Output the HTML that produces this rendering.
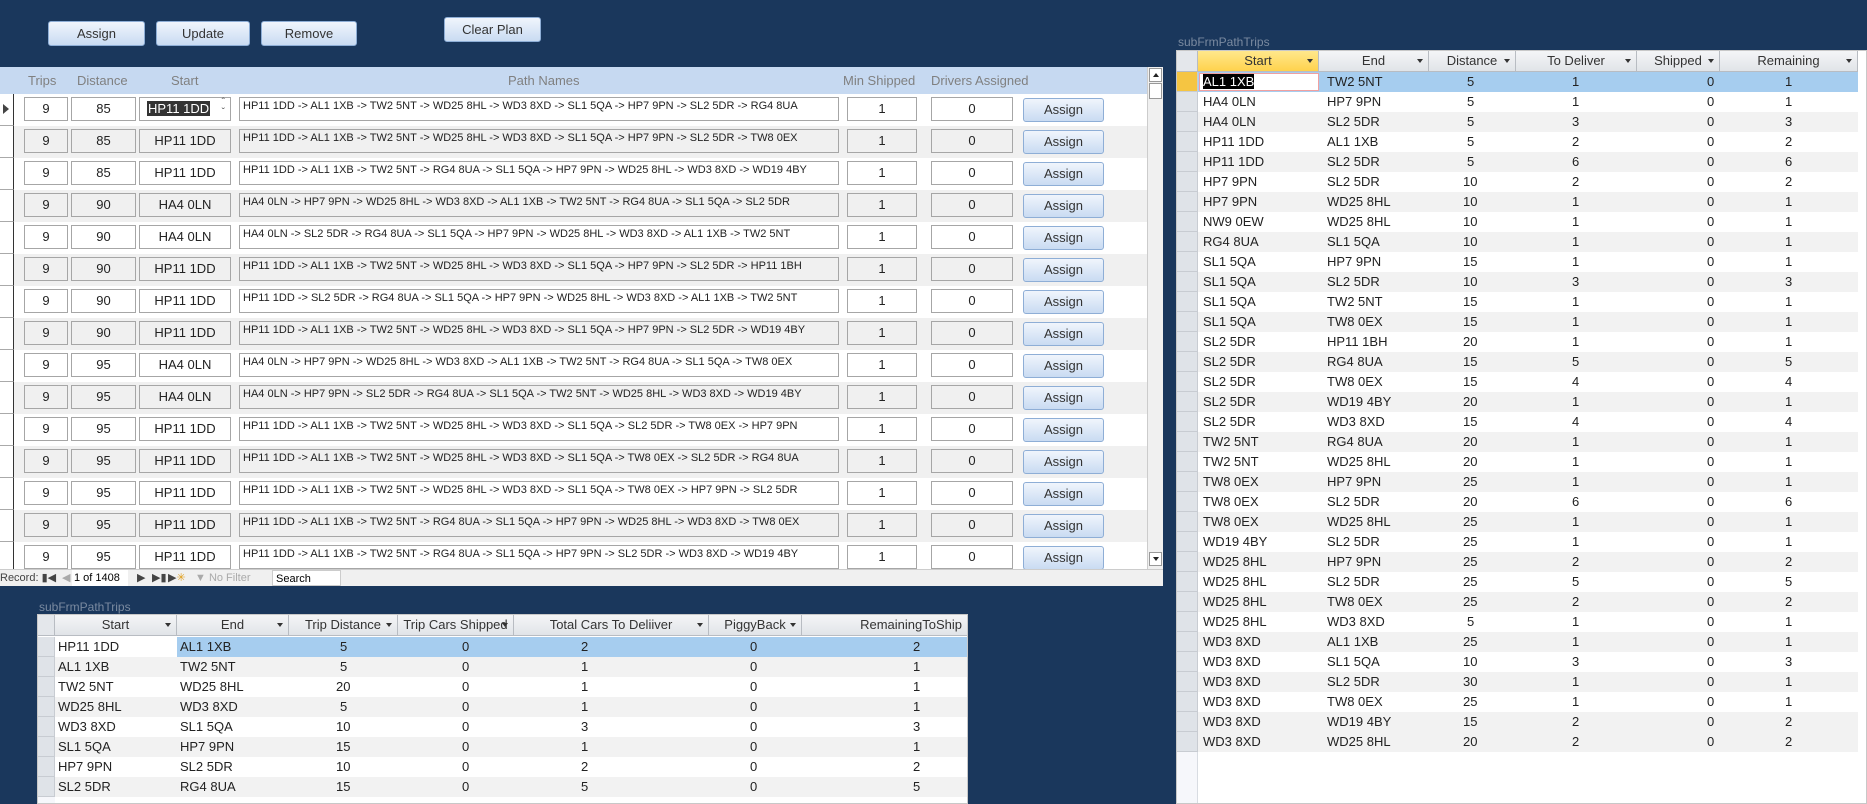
<!DOCTYPE html>
<html><head><meta charset="utf-8"><style>
*{box-sizing:border-box;margin:0;padding:0}
body{width:1867px;height:804px;background:#1a375c;position:relative;overflow:hidden;font-family:"Liberation Sans",sans-serif;color:#222}
.a{position:absolute}
.btn{position:absolute;border:1px solid #8eaed6;border-radius:3px;background:linear-gradient(#f0f5fc,#c9dbf2);font-size:13px;color:#333;text-align:center;line-height:23px}
#main{left:0;top:67px;width:1163px;height:519px;background:#fff;overflow:hidden}
.hdr{position:absolute;top:0;left:0;width:1147px;height:27px;background:#c6d9f1}
.hdr span{position:absolute;top:6px;font-size:13px;color:#808080}
.row{position:absolute;left:0;width:1147px;height:32px}
.row.g{background:#f0f0f0}
.sel{position:absolute;left:0;top:0;width:14px;height:32px;border-right:1px solid #333;border-bottom:1px solid #aaa;background:#fff}
.tb{position:absolute;top:3px;height:24px;border:1px solid #a6a6a6;background:#fff;font-size:13px;text-align:center;line-height:22px}
.g .tb{background:#f0f0f0}
.tb.p{text-align:left;font-size:11px;line-height:13px;padding:2px 3px;white-space:nowrap;overflow:hidden}
.row .btn{top:4px;left:1023px;width:81px;height:24px;line-height:22px}
.grid{position:absolute;background:#fff;border:1px solid #c8c8c8;overflow:hidden}
.gh{position:absolute;top:0;height:21px;background:linear-gradient(#f4f5f7,#e1e4e8);border-right:1px solid #b8bcc2;border-bottom:1px solid #b8bcc2;font-size:13px;color:#333;text-align:center;line-height:20px}
.gh i{position:absolute;right:5px;top:8px;width:0;height:0;border-left:3px solid transparent;border-right:3px solid transparent;border-top:4px solid #333}
.gr{position:absolute;left:0;height:20px;font-size:13px;line-height:20px;white-space:nowrap}
.gr.alt{background:#f2f2f2}
.gr span{position:absolute;top:0}
.gs{position:absolute;left:0;width:21px;height:20px;background:#dfe3e8;border-bottom:1px solid #c8ccd2;border-right:1px solid #c8ccd2}
.lbl{position:absolute;font-size:12px;color:#7a8aa0}
</style></head><body>

<div class="btn" style="left:48px;top:21px;width:97px;height:25px">Assign</div>
<div class="btn" style="left:156px;top:21px;width:94px;height:25px">Update</div>
<div class="btn" style="left:261px;top:21px;width:96px;height:25px">Remove</div>
<div class="btn" style="left:444px;top:17px;width:97px;height:25px">Clear Plan</div>

<div id="main" class="a">
<div class="hdr">
<span style="left:28px">Trips</span><span style="left:77px">Distance</span><span style="left:171px">Start</span><span style="left:508px">Path Names</span><span style="left:843px">Min Shipped</span><span style="left:931px">Drivers Assigned</span>
</div>
<div class="a" style="left:1147px;top:0;width:16px;height:505px;background:#f0f0f0;border-left:1px solid #ccc">
<div class="a" style="left:1px;top:1px;width:13px;height:14px;background:#fff;border:1px solid #999"><div class="a" style="left:3px;top:4px;border-left:3px solid transparent;border-right:3px solid transparent;border-bottom:4px solid #222"></div></div>
<div class="a" style="left:1px;top:16px;width:13px;height:16px;background:#fff;border:1px solid #999"></div>
<div class="a" style="left:1px;top:485px;width:13px;height:14px;background:#fff;border:1px solid #999"><div class="a" style="left:3px;top:4px;border-left:3px solid transparent;border-right:3px solid transparent;border-top:4px solid #222"></div></div>
</div>

<div class="row" style="top:27px"><div class="sel"><div class="a" style="left:3px;top:10px;border-top:5px solid transparent;border-bottom:5px solid transparent;border-left:6px solid #444"></div></div><div class="tb" style="left:24px;width:44px">9</div><div class="tb" style="left:71px;width:65px">85</div><div class="tb" style="left:139px;width:92px;text-align:left;padding-left:7px"><span style="background:#333;color:#fff;padding:0 1px">HP11 1DD</span><span class="a" style="right:5px;top:0;font-size:10px;line-height:10px;color:#555">&#710;<br>&#711;</span></div><div class="tb p" style="left:239px;width:600px">HP11 1DD -&gt; AL1 1XB -&gt; TW2 5NT -&gt; WD25 8HL -&gt; WD3 8XD -&gt; SL1 5QA -&gt; HP7 9PN -&gt; SL2 5DR -&gt; RG4 8UA</div><div class="tb" style="left:847px;width:70px">1</div><div class="tb" style="left:931px;width:82px">0</div><div class="btn">Assign</div></div>

<div class="row g" style="top:59px"><div class="sel"></div><div class="tb" style="left:24px;width:44px">9</div><div class="tb" style="left:71px;width:65px">85</div><div class="tb" style="left:139px;width:92px">HP11 1DD</div><div class="tb p" style="left:239px;width:600px">HP11 1DD -&gt; AL1 1XB -&gt; TW2 5NT -&gt; WD25 8HL -&gt; WD3 8XD -&gt; SL1 5QA -&gt; HP7 9PN -&gt; SL2 5DR -&gt; TW8 0EX</div><div class="tb" style="left:847px;width:70px">1</div><div class="tb" style="left:931px;width:82px">0</div><div class="btn">Assign</div></div>

<div class="row" style="top:91px"><div class="sel"></div><div class="tb" style="left:24px;width:44px">9</div><div class="tb" style="left:71px;width:65px">85</div><div class="tb" style="left:139px;width:92px">HP11 1DD</div><div class="tb p" style="left:239px;width:600px">HP11 1DD -&gt; AL1 1XB -&gt; TW2 5NT -&gt; RG4 8UA -&gt; SL1 5QA -&gt; HP7 9PN -&gt; WD25 8HL -&gt; WD3 8XD -&gt; WD19 4BY</div><div class="tb" style="left:847px;width:70px">1</div><div class="tb" style="left:931px;width:82px">0</div><div class="btn">Assign</div></div>

<div class="row g" style="top:123px"><div class="sel"></div><div class="tb" style="left:24px;width:44px">9</div><div class="tb" style="left:71px;width:65px">90</div><div class="tb" style="left:139px;width:92px">HA4 0LN</div><div class="tb p" style="left:239px;width:600px">HA4 0LN -&gt; HP7 9PN -&gt; WD25 8HL -&gt; WD3 8XD -&gt; AL1 1XB -&gt; TW2 5NT -&gt; RG4 8UA -&gt; SL1 5QA -&gt; SL2 5DR</div><div class="tb" style="left:847px;width:70px">1</div><div class="tb" style="left:931px;width:82px">0</div><div class="btn">Assign</div></div>

<div class="row" style="top:155px"><div class="sel"></div><div class="tb" style="left:24px;width:44px">9</div><div class="tb" style="left:71px;width:65px">90</div><div class="tb" style="left:139px;width:92px">HA4 0LN</div><div class="tb p" style="left:239px;width:600px">HA4 0LN -&gt; SL2 5DR -&gt; RG4 8UA -&gt; SL1 5QA -&gt; HP7 9PN -&gt; WD25 8HL -&gt; WD3 8XD -&gt; AL1 1XB -&gt; TW2 5NT</div><div class="tb" style="left:847px;width:70px">1</div><div class="tb" style="left:931px;width:82px">0</div><div class="btn">Assign</div></div>

<div class="row g" style="top:187px"><div class="sel"></div><div class="tb" style="left:24px;width:44px">9</div><div class="tb" style="left:71px;width:65px">90</div><div class="tb" style="left:139px;width:92px">HP11 1DD</div><div class="tb p" style="left:239px;width:600px">HP11 1DD -&gt; AL1 1XB -&gt; TW2 5NT -&gt; WD25 8HL -&gt; WD3 8XD -&gt; SL1 5QA -&gt; HP7 9PN -&gt; SL2 5DR -&gt; HP11 1BH</div><div class="tb" style="left:847px;width:70px">1</div><div class="tb" style="left:931px;width:82px">0</div><div class="btn">Assign</div></div>

<div class="row" style="top:219px"><div class="sel"></div><div class="tb" style="left:24px;width:44px">9</div><div class="tb" style="left:71px;width:65px">90</div><div class="tb" style="left:139px;width:92px">HP11 1DD</div><div class="tb p" style="left:239px;width:600px">HP11 1DD -&gt; SL2 5DR -&gt; RG4 8UA -&gt; SL1 5QA -&gt; HP7 9PN -&gt; WD25 8HL -&gt; WD3 8XD -&gt; AL1 1XB -&gt; TW2 5NT</div><div class="tb" style="left:847px;width:70px">1</div><div class="tb" style="left:931px;width:82px">0</div><div class="btn">Assign</div></div>

<div class="row g" style="top:251px"><div class="sel"></div><div class="tb" style="left:24px;width:44px">9</div><div class="tb" style="left:71px;width:65px">90</div><div class="tb" style="left:139px;width:92px">HP11 1DD</div><div class="tb p" style="left:239px;width:600px">HP11 1DD -&gt; AL1 1XB -&gt; TW2 5NT -&gt; WD25 8HL -&gt; WD3 8XD -&gt; SL1 5QA -&gt; HP7 9PN -&gt; SL2 5DR -&gt; WD19 4BY</div><div class="tb" style="left:847px;width:70px">1</div><div class="tb" style="left:931px;width:82px">0</div><div class="btn">Assign</div></div>

<div class="row" style="top:283px"><div class="sel"></div><div class="tb" style="left:24px;width:44px">9</div><div class="tb" style="left:71px;width:65px">95</div><div class="tb" style="left:139px;width:92px">HA4 0LN</div><div class="tb p" style="left:239px;width:600px">HA4 0LN -&gt; HP7 9PN -&gt; WD25 8HL -&gt; WD3 8XD -&gt; AL1 1XB -&gt; TW2 5NT -&gt; RG4 8UA -&gt; SL1 5QA -&gt; TW8 0EX</div><div class="tb" style="left:847px;width:70px">1</div><div class="tb" style="left:931px;width:82px">0</div><div class="btn">Assign</div></div>

<div class="row g" style="top:315px"><div class="sel"></div><div class="tb" style="left:24px;width:44px">9</div><div class="tb" style="left:71px;width:65px">95</div><div class="tb" style="left:139px;width:92px">HA4 0LN</div><div class="tb p" style="left:239px;width:600px">HA4 0LN -&gt; HP7 9PN -&gt; SL2 5DR -&gt; RG4 8UA -&gt; SL1 5QA -&gt; TW2 5NT -&gt; WD25 8HL -&gt; WD3 8XD -&gt; WD19 4BY</div><div class="tb" style="left:847px;width:70px">1</div><div class="tb" style="left:931px;width:82px">0</div><div class="btn">Assign</div></div>

<div class="row" style="top:347px"><div class="sel"></div><div class="tb" style="left:24px;width:44px">9</div><div class="tb" style="left:71px;width:65px">95</div><div class="tb" style="left:139px;width:92px">HP11 1DD</div><div class="tb p" style="left:239px;width:600px">HP11 1DD -&gt; AL1 1XB -&gt; TW2 5NT -&gt; WD25 8HL -&gt; WD3 8XD -&gt; SL1 5QA -&gt; SL2 5DR -&gt; TW8 0EX -&gt; HP7 9PN</div><div class="tb" style="left:847px;width:70px">1</div><div class="tb" style="left:931px;width:82px">0</div><div class="btn">Assign</div></div>

<div class="row g" style="top:379px"><div class="sel"></div><div class="tb" style="left:24px;width:44px">9</div><div class="tb" style="left:71px;width:65px">95</div><div class="tb" style="left:139px;width:92px">HP11 1DD</div><div class="tb p" style="left:239px;width:600px">HP11 1DD -&gt; AL1 1XB -&gt; TW2 5NT -&gt; WD25 8HL -&gt; WD3 8XD -&gt; SL1 5QA -&gt; TW8 0EX -&gt; SL2 5DR -&gt; RG4 8UA</div><div class="tb" style="left:847px;width:70px">1</div><div class="tb" style="left:931px;width:82px">0</div><div class="btn">Assign</div></div>

<div class="row" style="top:411px"><div class="sel"></div><div class="tb" style="left:24px;width:44px">9</div><div class="tb" style="left:71px;width:65px">95</div><div class="tb" style="left:139px;width:92px">HP11 1DD</div><div class="tb p" style="left:239px;width:600px">HP11 1DD -&gt; AL1 1XB -&gt; TW2 5NT -&gt; WD25 8HL -&gt; WD3 8XD -&gt; SL1 5QA -&gt; TW8 0EX -&gt; HP7 9PN -&gt; SL2 5DR</div><div class="tb" style="left:847px;width:70px">1</div><div class="tb" style="left:931px;width:82px">0</div><div class="btn">Assign</div></div>

<div class="row g" style="top:443px"><div class="sel"></div><div class="tb" style="left:24px;width:44px">9</div><div class="tb" style="left:71px;width:65px">95</div><div class="tb" style="left:139px;width:92px">HP11 1DD</div><div class="tb p" style="left:239px;width:600px">HP11 1DD -&gt; AL1 1XB -&gt; TW2 5NT -&gt; RG4 8UA -&gt; SL1 5QA -&gt; HP7 9PN -&gt; WD25 8HL -&gt; WD3 8XD -&gt; TW8 0EX</div><div class="tb" style="left:847px;width:70px">1</div><div class="tb" style="left:931px;width:82px">0</div><div class="btn">Assign</div></div>

<div class="row" style="top:475px"><div class="sel"></div><div class="tb" style="left:24px;width:44px">9</div><div class="tb" style="left:71px;width:65px">95</div><div class="tb" style="left:139px;width:92px">HP11 1DD</div><div class="tb p" style="left:239px;width:600px">HP11 1DD -&gt; AL1 1XB -&gt; TW2 5NT -&gt; RG4 8UA -&gt; SL1 5QA -&gt; HP7 9PN -&gt; SL2 5DR -&gt; WD3 8XD -&gt; WD19 4BY</div><div class="tb" style="left:847px;width:70px">1</div><div class="tb" style="left:931px;width:82px">0</div><div class="btn">Assign</div></div>

<div class="a" style="left:0;top:502px;width:1163px;height:17px;background:#f0f0f0;border-top:1px solid #ccc;font-size:11px;line-height:16px;color:#444">
<span class="a" style="left:0">Record: &#9646;&#9664;</span>
<span class="a" style="left:62px;color:#aaa">&#9664;</span>
<span class="a" style="left:72px;top:0;width:56px;height:16px;background:#fff;padding-left:2px;color:#000">1 of 1408</span>
<span class="a" style="left:137px">&#9654;</span><span class="a" style="left:152px">&#9654;&#9646;</span><span class="a" style="left:168px">&#9654;<span style="color:#e0a020">&#10035;</span></span>
<span class="a" style="left:195px;color:#aaa">&#9660; No Filter</span>
<span class="a" style="left:272px;top:0;width:69px;height:16px;background:#fff;border:1px solid #ccc;padding-left:3px;color:#000">Search</span>
</div>
</div>

<!-- right subform -->
<div class="lbl" style="left:1178px;top:35px">subFrmPathTrips</div>
<div class="grid" style="left:1176px;top:50px;width:691px;height:754px">
<div class="gh" style="left:0;width:21px;background:#e4e7eb"></div>
<div class="gh" style="left:21px;width:121px;background:linear-gradient(#ffe88c,#ffd24d)">Start<i></i></div>
<div class="gh" style="left:142px;width:110px">End<i></i></div>
<div class="gh" style="left:252px;width:87px">Distance<i></i></div>
<div class="gh" style="left:339px;width:121px">To Deliver<i></i></div>
<div class="gh" style="left:460px;width:83px">Shipped<i></i></div>
<div class="gh" style="left:543px;width:138px">Remaining<i></i></div>
<div class="a" style="left:0;top:21px;width:21px;height:733px;background:#f6f7fb;border-right:1px solid #d8dce2"></div>
<div id="rrows" class="a" style="left:0;top:21px;width:681px">
<div class="gr" style="top:0;width:681px;background:#a6cdef"><div class="gs" style="background:#f5c542"></div><span style="left:22px;top:1px;width:120px;height:18px;background:#fff;border:1px solid #f0a0a0;padding-left:3px;line-height:16px"><b style="font-weight:normal;background:#000;color:#fff">AL1 1XB</b></span><span style="left:150px">TW2 5NT</span><span style="left:290px">5</span><span style="left:395px">1</span><span style="left:530px">0</span><span style="left:608px">1</span></div>
<div class="gr" style="top:20px;width:681px"><div class="gs"></div><span style="left:26px">HA4 0LN</span><span style="left:150px">HP7 9PN</span><span style="left:290px">5</span><span style="left:395px">1</span><span style="left:530px">0</span><span style="left:608px">1</span></div>
<div class="gr alt" style="top:40px;width:681px"><div class="gs"></div><span style="left:26px">HA4 0LN</span><span style="left:150px">SL2 5DR</span><span style="left:290px">5</span><span style="left:395px">3</span><span style="left:530px">0</span><span style="left:608px">3</span></div>
<div class="gr" style="top:60px;width:681px"><div class="gs"></div><span style="left:26px">HP11 1DD</span><span style="left:150px">AL1 1XB</span><span style="left:290px">5</span><span style="left:395px">2</span><span style="left:530px">0</span><span style="left:608px">2</span></div>
<div class="gr alt" style="top:80px;width:681px"><div class="gs"></div><span style="left:26px">HP11 1DD</span><span style="left:150px">SL2 5DR</span><span style="left:290px">5</span><span style="left:395px">6</span><span style="left:530px">0</span><span style="left:608px">6</span></div>
<div class="gr" style="top:100px;width:681px"><div class="gs"></div><span style="left:26px">HP7 9PN</span><span style="left:150px">SL2 5DR</span><span style="left:286px">10</span><span style="left:395px">2</span><span style="left:530px">0</span><span style="left:608px">2</span></div>
<div class="gr alt" style="top:120px;width:681px"><div class="gs"></div><span style="left:26px">HP7 9PN</span><span style="left:150px">WD25 8HL</span><span style="left:286px">10</span><span style="left:395px">1</span><span style="left:530px">0</span><span style="left:608px">1</span></div>
<div class="gr" style="top:140px;width:681px"><div class="gs"></div><span style="left:26px">NW9 0EW</span><span style="left:150px">WD25 8HL</span><span style="left:286px">10</span><span style="left:395px">1</span><span style="left:530px">0</span><span style="left:608px">1</span></div>
<div class="gr alt" style="top:160px;width:681px"><div class="gs"></div><span style="left:26px">RG4 8UA</span><span style="left:150px">SL1 5QA</span><span style="left:286px">10</span><span style="left:395px">1</span><span style="left:530px">0</span><span style="left:608px">1</span></div>
<div class="gr" style="top:180px;width:681px"><div class="gs"></div><span style="left:26px">SL1 5QA</span><span style="left:150px">HP7 9PN</span><span style="left:286px">15</span><span style="left:395px">1</span><span style="left:530px">0</span><span style="left:608px">1</span></div>
<div class="gr alt" style="top:200px;width:681px"><div class="gs"></div><span style="left:26px">SL1 5QA</span><span style="left:150px">SL2 5DR</span><span style="left:286px">10</span><span style="left:395px">3</span><span style="left:530px">0</span><span style="left:608px">3</span></div>
<div class="gr" style="top:220px;width:681px"><div class="gs"></div><span style="left:26px">SL1 5QA</span><span style="left:150px">TW2 5NT</span><span style="left:286px">15</span><span style="left:395px">1</span><span style="left:530px">0</span><span style="left:608px">1</span></div>
<div class="gr alt" style="top:240px;width:681px"><div class="gs"></div><span style="left:26px">SL1 5QA</span><span style="left:150px">TW8 0EX</span><span style="left:286px">15</span><span style="left:395px">1</span><span style="left:530px">0</span><span style="left:608px">1</span></div>
<div class="gr" style="top:260px;width:681px"><div class="gs"></div><span style="left:26px">SL2 5DR</span><span style="left:150px">HP11 1BH</span><span style="left:286px">20</span><span style="left:395px">1</span><span style="left:530px">0</span><span style="left:608px">1</span></div>
<div class="gr alt" style="top:280px;width:681px"><div class="gs"></div><span style="left:26px">SL2 5DR</span><span style="left:150px">RG4 8UA</span><span style="left:286px">15</span><span style="left:395px">5</span><span style="left:530px">0</span><span style="left:608px">5</span></div>
<div class="gr" style="top:300px;width:681px"><div class="gs"></div><span style="left:26px">SL2 5DR</span><span style="left:150px">TW8 0EX</span><span style="left:286px">15</span><span style="left:395px">4</span><span style="left:530px">0</span><span style="left:608px">4</span></div>
<div class="gr alt" style="top:320px;width:681px"><div class="gs"></div><span style="left:26px">SL2 5DR</span><span style="left:150px">WD19 4BY</span><span style="left:286px">20</span><span style="left:395px">1</span><span style="left:530px">0</span><span style="left:608px">1</span></div>
<div class="gr" style="top:340px;width:681px"><div class="gs"></div><span style="left:26px">SL2 5DR</span><span style="left:150px">WD3 8XD</span><span style="left:286px">15</span><span style="left:395px">4</span><span style="left:530px">0</span><span style="left:608px">4</span></div>
<div class="gr alt" style="top:360px;width:681px"><div class="gs"></div><span style="left:26px">TW2 5NT</span><span style="left:150px">RG4 8UA</span><span style="left:286px">20</span><span style="left:395px">1</span><span style="left:530px">0</span><span style="left:608px">1</span></div>
<div class="gr" style="top:380px;width:681px"><div class="gs"></div><span style="left:26px">TW2 5NT</span><span style="left:150px">WD25 8HL</span><span style="left:286px">20</span><span style="left:395px">1</span><span style="left:530px">0</span><span style="left:608px">1</span></div>
<div class="gr alt" style="top:400px;width:681px"><div class="gs"></div><span style="left:26px">TW8 0EX</span><span style="left:150px">HP7 9PN</span><span style="left:286px">25</span><span style="left:395px">1</span><span style="left:530px">0</span><span style="left:608px">1</span></div>
<div class="gr" style="top:420px;width:681px"><div class="gs"></div><span style="left:26px">TW8 0EX</span><span style="left:150px">SL2 5DR</span><span style="left:286px">20</span><span style="left:395px">6</span><span style="left:530px">0</span><span style="left:608px">6</span></div>
<div class="gr alt" style="top:440px;width:681px"><div class="gs"></div><span style="left:26px">TW8 0EX</span><span style="left:150px">WD25 8HL</span><span style="left:286px">25</span><span style="left:395px">1</span><span style="left:530px">0</span><span style="left:608px">1</span></div>
<div class="gr" style="top:460px;width:681px"><div class="gs"></div><span style="left:26px">WD19 4BY</span><span style="left:150px">SL2 5DR</span><span style="left:286px">25</span><span style="left:395px">1</span><span style="left:530px">0</span><span style="left:608px">1</span></div>
<div class="gr alt" style="top:480px;width:681px"><div class="gs"></div><span style="left:26px">WD25 8HL</span><span style="left:150px">HP7 9PN</span><span style="left:286px">25</span><span style="left:395px">2</span><span style="left:530px">0</span><span style="left:608px">2</span></div>
<div class="gr" style="top:500px;width:681px"><div class="gs"></div><span style="left:26px">WD25 8HL</span><span style="left:150px">SL2 5DR</span><span style="left:286px">25</span><span style="left:395px">5</span><span style="left:530px">0</span><span style="left:608px">5</span></div>
<div class="gr alt" style="top:520px;width:681px"><div class="gs"></div><span style="left:26px">WD25 8HL</span><span style="left:150px">TW8 0EX</span><span style="left:286px">25</span><span style="left:395px">2</span><span style="left:530px">0</span><span style="left:608px">2</span></div>
<div class="gr" style="top:540px;width:681px"><div class="gs"></div><span style="left:26px">WD25 8HL</span><span style="left:150px">WD3 8XD</span><span style="left:290px">5</span><span style="left:395px">1</span><span style="left:530px">0</span><span style="left:608px">1</span></div>
<div class="gr alt" style="top:560px;width:681px"><div class="gs"></div><span style="left:26px">WD3 8XD</span><span style="left:150px">AL1 1XB</span><span style="left:286px">25</span><span style="left:395px">1</span><span style="left:530px">0</span><span style="left:608px">1</span></div>
<div class="gr" style="top:580px;width:681px"><div class="gs"></div><span style="left:26px">WD3 8XD</span><span style="left:150px">SL1 5QA</span><span style="left:286px">10</span><span style="left:395px">3</span><span style="left:530px">0</span><span style="left:608px">3</span></div>
<div class="gr alt" style="top:600px;width:681px"><div class="gs"></div><span style="left:26px">WD3 8XD</span><span style="left:150px">SL2 5DR</span><span style="left:286px">30</span><span style="left:395px">1</span><span style="left:530px">0</span><span style="left:608px">1</span></div>
<div class="gr" style="top:620px;width:681px"><div class="gs"></div><span style="left:26px">WD3 8XD</span><span style="left:150px">TW8 0EX</span><span style="left:286px">25</span><span style="left:395px">1</span><span style="left:530px">0</span><span style="left:608px">1</span></div>
<div class="gr alt" style="top:640px;width:681px"><div class="gs"></div><span style="left:26px">WD3 8XD</span><span style="left:150px">WD19 4BY</span><span style="left:286px">15</span><span style="left:395px">2</span><span style="left:530px">0</span><span style="left:608px">2</span></div>
<div class="gr" style="top:660px;width:681px;background:#f2f2f2"><div class="gs"></div><span style="left:26px">WD3 8XD</span><span style="left:150px">WD25 8HL</span><span style="left:286px">20</span><span style="left:395px">2</span><span style="left:530px">0</span><span style="left:608px">2</span></div>
</div>
</div>

<!-- bottom subform -->
<div class="lbl" style="left:39px;top:600px">subFrmPathTrips</div>
<div class="grid" style="left:37px;top:614px;width:931px;height:190px">
<div class="gh" style="left:0;width:17px;background:#e4e7eb"></div>
<div class="gh" style="left:17px;width:122px">Start<i></i></div>
<div class="gh" style="left:139px;width:112px">End<i></i></div>
<div class="gh" style="left:251px;width:109px">Trip Distance<i></i></div>
<div class="gh" style="left:360px;width:116px">Trip Cars Shipped<i></i></div>
<div class="gh" style="left:476px;width:195px">Total Cars To Deliiver<i></i></div>
<div class="gh" style="left:671px;width:93px">PiggyBack<i></i></div>
<div class="gh" style="left:764px;width:167px;text-align:right;padding-right:6px">RemainingToShip</div>
<div class="a" style="left:0;top:22px;width:17px;height:168px;background:#f6f7fb"></div>
<div class="gr" style="top:22px;width:931px;background:#a6cdef"><div class="gs" style="width:17px"></div><span style="left:17px;width:122px;height:20px;background:#fff;padding-left:3px">HP11 1DD</span><span style="left:142px">AL1 1XB</span><span style="left:302px">5</span><span style="left:424px">0</span><span style="left:543px">2</span><span style="left:712px">0</span><span style="left:875px">2</span></div>
<div class="gr alt" style="top:42px;width:931px"><div class="gs" style="width:17px"></div><span style="left:20px">AL1 1XB</span><span style="left:142px">TW2 5NT</span><span style="left:302px">5</span><span style="left:424px">0</span><span style="left:543px">1</span><span style="left:712px">0</span><span style="left:875px">1</span></div>
<div class="gr" style="top:62px;width:931px"><div class="gs" style="width:17px"></div><span style="left:20px">TW2 5NT</span><span style="left:142px">WD25 8HL</span><span style="left:298px">20</span><span style="left:424px">0</span><span style="left:543px">1</span><span style="left:712px">0</span><span style="left:875px">1</span></div>
<div class="gr alt" style="top:82px;width:931px"><div class="gs" style="width:17px"></div><span style="left:20px">WD25 8HL</span><span style="left:142px">WD3 8XD</span><span style="left:302px">5</span><span style="left:424px">0</span><span style="left:543px">1</span><span style="left:712px">0</span><span style="left:875px">1</span></div>
<div class="gr" style="top:102px;width:931px"><div class="gs" style="width:17px"></div><span style="left:20px">WD3 8XD</span><span style="left:142px">SL1 5QA</span><span style="left:298px">10</span><span style="left:424px">0</span><span style="left:543px">3</span><span style="left:712px">0</span><span style="left:875px">3</span></div>
<div class="gr alt" style="top:122px;width:931px"><div class="gs" style="width:17px"></div><span style="left:20px">SL1 5QA</span><span style="left:142px">HP7 9PN</span><span style="left:298px">15</span><span style="left:424px">0</span><span style="left:543px">1</span><span style="left:712px">0</span><span style="left:875px">1</span></div>
<div class="gr" style="top:142px;width:931px"><div class="gs" style="width:17px"></div><span style="left:20px">HP7 9PN</span><span style="left:142px">SL2 5DR</span><span style="left:298px">10</span><span style="left:424px">0</span><span style="left:543px">2</span><span style="left:712px">0</span><span style="left:875px">2</span></div>
<div class="gr alt" style="top:162px;width:931px"><div class="gs" style="width:17px"></div><span style="left:20px">SL2 5DR</span><span style="left:142px">RG4 8UA</span><span style="left:298px">15</span><span style="left:424px">0</span><span style="left:543px">5</span><span style="left:712px">0</span><span style="left:875px">5</span></div>
</div>
</body></html>
